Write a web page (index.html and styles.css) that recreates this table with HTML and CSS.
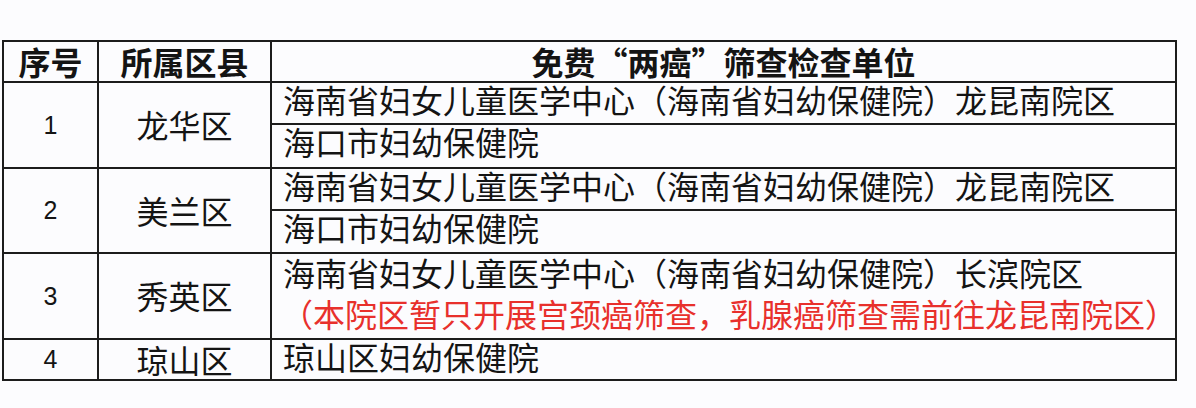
FILE: index.html
```html
<!DOCTYPE html>
<html lang="zh-CN">
<head>
<meta charset="utf-8">
<title>免费“两癌”筛查检查单位</title>
<link rel="stylesheet" href="styles.css">
</head>
<body>
<table class="units">
  <colgroup>
    <col class="c-no">
    <col class="c-dist">
    <col class="c-unit">
  </colgroup>
  <thead>
    <tr class="r-head">
      <th>序号</th>
      <th>所属区县</th>
      <th>免费“两癌”筛查检查单位</th>
    </tr>
  </thead>
  <tbody>
    <tr class="r-a">
      <td class="no" rowspan="2">1</td>
      <td class="dist" rowspan="2">龙华区</td>
      <td class="unit">海南省妇女儿童医学中心（海南省妇幼保健院）龙昆南院区</td>
    </tr>
    <tr class="r-b">
      <td class="unit">海口市妇幼保健院</td>
    </tr>
    <tr class="r-a">
      <td class="no" rowspan="2">2</td>
      <td class="dist" rowspan="2">美兰区</td>
      <td class="unit">海南省妇女儿童医学中心（海南省妇幼保健院）龙昆南院区</td>
    </tr>
    <tr class="r-b2">
      <td class="unit">海口市妇幼保健院</td>
    </tr>
    <tr class="r-3">
      <td class="no">3</td>
      <td class="dist">秀英区</td>
      <td class="unit unit-multi">
        <div class="line">海南省妇女儿童医学中心（海南省妇幼保健院）长滨院区</div>
        <div class="line note">（本院区暂只开展宫颈癌筛查，乳腺癌筛查需前往龙昆南院区）</div>
      </td>
    </tr>
    <tr class="r-4">
      <td class="no">4</td>
      <td class="dist">琼山区</td>
      <td class="unit">琼山区妇幼保健院</td>
    </tr>
  </tbody>
</table>
</body>
</html>
```

FILE: styles.css
```css
html, body {
  margin: 0;
  padding: 0;
  background: #fcfcfe;
}

body {
  padding: 40px 0 0 2px;
  font-family: "Noto Sans CJK SC", "Noto Sans", sans-serif;
  color: #141414;
}

.units {
  table-layout: fixed;
  border-collapse: separate;
  border-spacing: 0;
  width: 1175px;
  border-top: 2px solid #1c1c1c;
  border-left: 2px solid #1c1c1c;
}

.c-no { width: 95px; }
.c-dist { width: 173px; }
.c-unit { width: 905px; }

.units th,
.units td {
  border-right: 2px solid #1c1c1c;
  border-bottom: 2px solid #1c1c1c;
  padding: 0;
  font-size: 32px;
  line-height: 32px;
  white-space: nowrap;
}

.units th {
  font-weight: 700;
  text-align: center;
  vertical-align: middle;
  padding-bottom: 2px;
}

.r-head { height: 41px; }
.r-a { height: 42px; }
.r-b { height: 44px; }
.r-b2 { height: 43px; }
.r-3 { height: 86px; }
.r-4 { height: 41px; }

.units td.no {
  font-family: "Liberation Sans", "Open Sans", sans-serif;
  font-size: 25px;
  line-height: 25px;
  text-align: center;
  vertical-align: middle;
}

.units td.dist {
  text-align: center;
  vertical-align: middle;
  padding-bottom: 2px;
}

.units td.unit {
  text-align: left;
  vertical-align: top;
  padding: 0 0 0 11px;
}

.units td.unit-multi {
  padding-top: 2px;
}

.line {
  height: 41px;
}

.note {
  height: 32px;
  color: #e8302c;
  margin-left: -2px;
}
```
